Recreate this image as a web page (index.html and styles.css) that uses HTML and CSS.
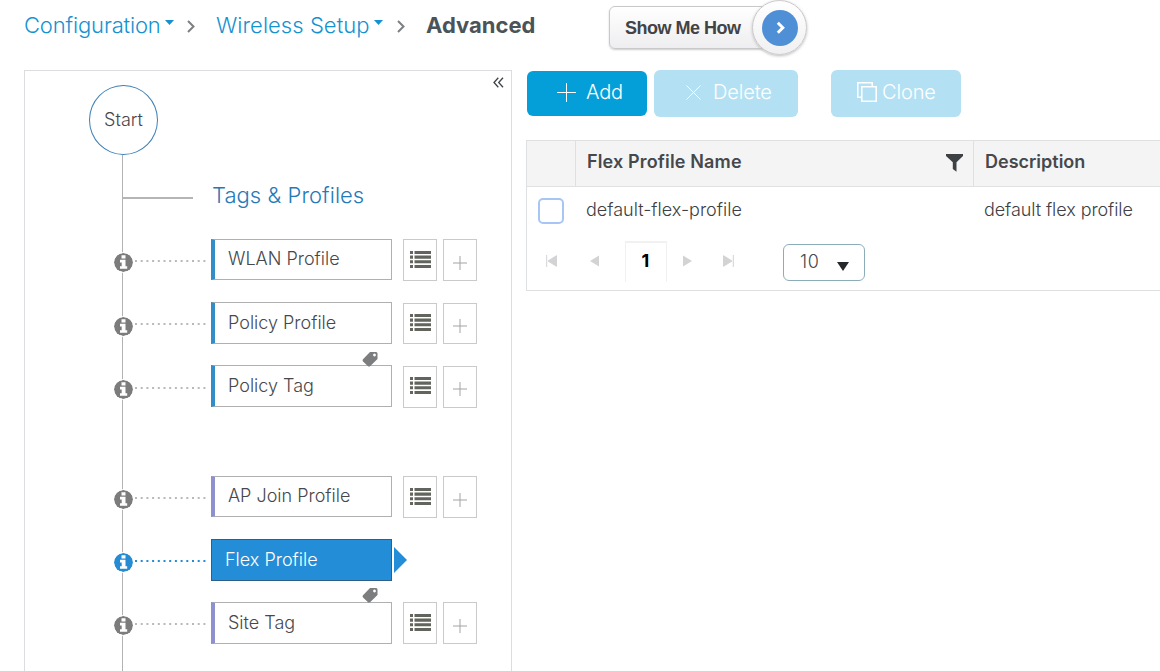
FILE: index.html
```
<!DOCTYPE html>
<html lang="en">
<head>
<meta charset="utf-8">
<title>Advanced Wireless Setup</title>
<link rel="stylesheet" href="styles.css">
</head>
<body>
<svg class="defs" width="0" height="0" aria-hidden="true">
  <symbol id="info" viewBox="0 0 19 19"><circle cx="9.500" cy="9.500" r="9.500" fill="currentColor"/><path fill="#fff" d="M7.500 2.200h4v3.200h-4zM6 6.800h5.500v6.400h1.700v2.600H6v-2.600h1.700V9.400H6z"/></symbol>
  <symbol id="list" viewBox="0 0 21 17"><path fill="currentColor" d="M0 0h3v3H0zM4.500 0H21v3H4.500zM0 4.600h3v3.200H0zM4.500 4.600H21v3.200H4.500zM0 9.300h3v3H0zM4.500 9.300H21v3H4.500zM0 14h3v3H0zM4.500 14H21v3H4.500z"/></symbol>
  <symbol id="plus" viewBox="0 0 14 14"><path d="M7 0v14M0 7h14" stroke="currentColor" fill="none"/></symbol>
  <symbol id="tag" viewBox="0 0 16 16"><path fill="currentColor" fill-rule="evenodd" d="M8 1h6q1.500 0 1.500 1.500V8L8.300 15q-1.300 1-2.500 0L1 10.500q-1-1.200 0-2.300zM12.500 2.600a1.400 1.400 0 1 0 .01 0z"/></symbol>
  <symbol id="dots" viewBox="0 0 71 2"><path d="M0 1h71" stroke="currentColor" stroke-width="2" stroke-dasharray="2 3.700"/></symbol>
</svg>

<header class="topbar">
  <nav class="crumbs">
    <a class="crumb crumb-config">Configuration</a><i class="caret"></i>
    <svg class="sep" width="8" height="13" viewBox="0 0 8 13"><path d="M1 1l5.500 5.500L1 12" fill="none" stroke="#7c8083" stroke-width="2"/></svg>
    <a class="crumb crumb-setup">Wireless Setup</a><i class="caret"></i>
    <svg class="sep sep-last" width="8" height="13" viewBox="0 0 8 13"><path d="M1 1l5.500 5.500L1 12" fill="none" stroke="#7c8083" stroke-width="2"/></svg>
    <span class="crumb-current">Advanced</span>
  </nav>
  <div class="show-how">
    <span class="show-label">Show Me How</span>
    <span class="show-knob"><svg width="36" height="36" viewBox="0 0 36 36"><circle cx="18" cy="18" r="18" fill="#4f8fd5"/><path d="M15.800 12.700l5 5-5 5" fill="none" stroke="#fff" stroke-width="3"/></svg></span>
  </div>
</header>

<main class="main">
  <section class="tree">
    <div class="tree-head">
      <div class="start">Start</div>
      <svg class="collapse" width="11" height="11" viewBox="0 0 11 11"><path d="M5.300.7L1 5.500l4.300 4.800M10 .7L5.700 5.500 10 10.300" fill="none" stroke="#3f4347" stroke-width="1.300"/></svg>
    </div>
    <div class="group"><i class="branch"></i><h2 class="group-title">Tags &amp; Profiles</h2></div>
    <div class="rows">
      <div class="row row-wlan"><svg class="info"><use href="#info"/></svg><svg class="dots"><use href="#dots"/></svg><div class="node"><span>WLAN Profile</span></div><div class="mini"><svg class="list"><use href="#list"/></svg></div><div class="mini"><svg class="plus"><use href="#plus"/></svg></div></div>
      <div class="row row-low"><svg class="info"><use href="#info"/></svg><svg class="dots"><use href="#dots"/></svg><div class="node"><span>Policy Profile</span></div><div class="mini"><svg class="list"><use href="#list"/></svg></div><div class="mini"><svg class="plus"><use href="#plus"/></svg></div></div>
      <div class="row row-low row-ptag"><svg class="info"><use href="#info"/></svg><svg class="dots"><use href="#dots"/></svg><div class="node"><span>Policy Tag</span><svg class="tag"><use href="#tag"/></svg></div><div class="mini"><svg class="list"><use href="#list"/></svg></div><div class="mini"><svg class="plus"><use href="#plus"/></svg></div></div>
    </div>
    <div class="rows rows-site">
      <div class="row row-join"><svg class="info"><use href="#info"/></svg><svg class="dots"><use href="#dots"/></svg><div class="node"><span>AP Join Profile</span></div><div class="mini"><svg class="list"><use href="#list"/></svg></div><div class="mini"><svg class="plus"><use href="#plus"/></svg></div></div>
      <div class="row row-active"><svg class="info"><use href="#info"/></svg><svg class="dots"><use href="#dots"/></svg><div class="node"><span>Flex Profile</span></div><i class="pointer"></i></div>
      <div class="row row-site"><svg class="info"><use href="#info"/></svg><svg class="dots"><use href="#dots"/></svg><div class="node"><span>Site Tag</span><svg class="tag"><use href="#tag"/></svg></div><div class="mini"><svg class="list"><use href="#list"/></svg></div><div class="mini"><svg class="plus"><use href="#plus"/></svg></div></div>
    </div>
  </section>

  <section class="content">
    <div class="actions">
      <button class="btn btn-add"><svg width="19" height="19" viewBox="0 0 19 19"><path d="M9.500 0v19M0 9.500h19" stroke="#fff" fill="none"/></svg><span>Add</span></button>
      <button class="btn btn-off btn-delete"><svg width="15" height="15" viewBox="0 0 15 15"><path d="M.5.500l14 14M14.500.500l-14 14" stroke="#fff" fill="none"/></svg><span>Delete</span></button>
      <button class="btn btn-off btn-clone"><svg width="20" height="20" viewBox="0 0 20 20"><path d="M4.500 15.200H.8V.8h14.400v3.400M4.800 4.800h14.400v14.400H4.800z" stroke="#fff" stroke-width="1.500" fill="none"/></svg><span>Clone</span></button>
    </div>
    <div class="grid">
      <div class="grid-head">
        <div class="cell-check"></div>
        <div class="cell-name"><span class="head-name">Flex Profile Name</span><svg width="17" height="18" viewBox="0 0 17 18"><path d="M0 0h17v2l-6.500 6.200v9.600L6.800 15V8.200L0 2z" fill="#3e4144"/></svg></div>
        <div class="cell-desc"><span>Description</span></div>
      </div>
      <div class="grid-row">
        <div class="cell-check"><i class="box"></i></div>
        <div class="cell-name"><span>default-flex-profile</span></div>
        <div class="cell-desc"><span>default flex profile</span></div>
      </div>
      <div class="pager">
        <svg class="pg-first" width="11" height="12" viewBox="0 0 11 12"><path d="M.7 0v12M10.500.7v10.600L2 6z" fill="#d3d3d5" stroke="#d3d3d5"/></svg>
        <svg class="pg-prev" width="10" height="12" viewBox="0 0 10 12"><path d="M9 .5v11L0 6z" fill="#d3d3d5"/></svg>
        <span class="page">1</span>
        <svg class="pg-next" width="10" height="12" viewBox="0 0 10 12"><path d="M1 .5v11L10 6z" fill="#d3d3d5"/></svg>
        <svg class="pg-last" width="11" height="12" viewBox="0 0 11 12"><path d="M10.300 0v12M.5.700v10.600L9 6z" fill="#d3d3d5" stroke="#d3d3d5"/></svg>
        <div class="size"><span>10</span><i class="down"></i></div>
      </div>
    </div>
  </section>
</main>
</body>
</html>
```

FILE: styles.css
```
* { box-sizing: border-box; }
body { margin: 0; width: 1160px; height: 671px; overflow: hidden; background: #fff; color: #46484c; font: 300 18px/24px Inter, "Liberation Sans", sans-serif; }
svg { display: block; flex: none; }
i { display: block; flex: none; }
span { white-space: nowrap; }
.defs { position: absolute; }

.topbar { display: flex; height: 70px; padding-left: 24px; }
.crumbs { display: flex; width: 585px; height: 50px; align-items: center; font-size: 22px; color: #1492d0; }
.crumb { white-space: nowrap; flex: none; }
.crumb-config { width: 141px; letter-spacing: -.15px; }
.crumb-setup { width: 158px; letter-spacing: .05px; }
.caret { width: 9px; height: 5px; margin-top: -5px; background: #1492d0; clip-path: polygon(0 0, 100% 0, 50% 100%); }
.sep { margin: 2px 21px 0 13px; }
.sep-last { margin-left: 14px; }
.crumb-current { font-weight: 700; color: #4b5358; }
.show-how { display: flex; width: 171px; height: 43px; margin-top: 6px; padding-left: 15px; align-items: center; border: 1px solid #c9c9cb; border-radius: 6px; background: linear-gradient(#fff, #eeeef0); box-shadow: 0 1px 2px #ccc; color: #434345; font: 700 18px "Liberation Sans", sans-serif; }
.show-label { flex: none; width: 127px; padding-top: 1px; letter-spacing: -.5px; }
.show-knob { display: grid; flex: none; width: 55px; height: 55px; place-items: center; border: 1px solid #c9c9cb; border-radius: 50%; background: linear-gradient(#fff, #f0f0f2); box-shadow: 0 1px 3px #bbb; }

.main { display: flex; gap: 14px; padding-left: 24px; }
.tree { flex: none; width: 488px; height: 601px; border: 1px solid #dcdde0; border-bottom: 0; background: linear-gradient(#b2b2b4, #b2b2b4) 97px 84px / 1px 100% no-repeat; }
.tree-head { display: flex; justify-content: space-between; height: 84px; padding: 14px 7px 0 64px; }
.start { display: grid; place-items: center; width: 69px; height: 70px; border: 1px solid #3d80b5; border-radius: 50%; background: #fff; }
.collapse { margin-top: -8px; }
.group { display: flex; height: 84px; padding: 28px 0 0 98px; }
.branch { width: 70px; height: 2px; margin: 14px 19px 0 0; background: #b5b5b7; }
.group-title { margin: 0; font-size: 22px; line-height: 24px; font-weight: 300; letter-spacing: .05px; color: #2679b8; }
.rows { display: grid; gap: 21px; }
.rows-site { margin-top: 69px; }
.row { display: flex; height: 42px; padding-left: 89px; }
.info { width: 19px; height: 19px; margin: 14px 2px 0 0; color: #7c7c7c; border-radius: 50%; box-shadow: 0 0 0 1px #fff; }
.row-low .info { margin-top: 15px; }
.dots { width: 71px; height: 2px; margin: 21px 5px 0 0; color: #b9b9bb; }
.row-ptag .dots { margin-top: 22px; }
.node { position: relative; flex: none; width: 181px; height: 42px; margin-right: 11px; padding: 0 0 0 13px; line-height: 40px; border: 1px solid #aeb0b2; border-left: 4px solid #338dc6; }
.row-wlan .node, .row-join .node { height: 41px; line-height: 38px; }
.rows-site .node { border-left-color: #8e91cd; }
.tag { position: absolute; top: -15px; right: 13px; width: 16px; height: 16px; color: #7b7d7e; }
.row-site .tag { top: -16px; }
.mini { display: grid; width: 34px; height: 42px; margin-right: 6px; border: 1px solid #c9cacc; }
.row-low .mini { height: 41px; margin-top: 1px; }
.row-ptag .mini { height: 42px; }
.list { width: 21px; height: 17px; margin: 11px 0 0 6px; color: #62655d; }
.row-low .list { margin-top: 10px; }
.plus { width: 14px; height: 14px; margin: 16px 0 0 9px; color: #a3a3a5; }
.row-low .plus { margin-top: 15px; }
.row-active .info, .row-active .dots { color: #258cd4; }
.rows-site .row-active .node { margin-right: 2px; padding-left: 13px; border: 1px solid #2d5f87; background: #238ed7; color: #fff; }
.pointer { width: 13px; height: 26px; margin-top: 8px; background: #238ed7; clip-path: polygon(0 0, 100% 50%, 0 100%); }

.content { flex: 1; min-width: 0; }
.actions { display: flex; height: 70px; padding-left: 1px; align-items: flex-start; }
.btn { display: flex; align-items: center; height: 47px; padding: 0 0 3px; border: 0; border-radius: 6px; color: #fff; font: 300 20px/24px Inter, "Liberation Sans", sans-serif; letter-spacing: -.15px; }
.btn-add { width: 120px; height: 45px; margin: 1px 7px 0 0; padding-left: 30px; gap: 10px; background: #049fd9; }
.btn-off { background: #b3e1f3; }
.btn-delete { width: 144px; margin-right: 33px; padding-left: 32px; gap: 12px; }
.btn-clone { width: 130px; padding-left: 26px; gap: 5px; }
.grid { height: 151px; border: 1px solid #dfe0e2; border-right: 0; }
.grid-head { display: flex; height: 46px; background: #f4f4f5; border-bottom: 1px solid #e0e1e3; font-weight: 600; }
.head-name { letter-spacing: .15px; }
.cell-check { flex: none; width: 48px; }
.cell-name { display: flex; flex: none; width: 399px; padding: 9px 11px 0 11px; }
.cell-desc { flex: 1; padding: 9px 0 0 11px; }
.grid-head .cell-name { justify-content: space-between; border: solid #dfe0e2; border-width: 0 1px; }
.cell-name svg { margin-top: 4px; margin-right: -1px; }
.grid-row { display: flex; height: 52px; color: #3d4044; }
.grid-row .cell-name, .grid-row .cell-desc { padding-top: 11px; }
.grid-row .cell-desc { padding-left: 10px; letter-spacing: -.08px; }
.box { width: 26px; height: 26px; margin: 11px 0 0 11px; border: 2px solid #a8c6f5; border-radius: 5px; }
.pager { display: flex; height: 51px; align-items: flex-start; padding-left: 19px; }
.pager > svg { margin-top: 16px; }
.pager .pg-prev { margin-left: 33px; }
.page { width: 42px; height: 41px; margin: 2px 15px 0 25px; padding-right: 1px; border: solid #f1f1f2; border-width: 2px 1px 0; text-align: center; line-height: 35px; font-weight: 700; color: #000; }
.pager .pg-last { margin-left: 31px; }
.size { display: flex; width: 82px; height: 37px; margin: 5px 0 0 49px; padding-left: 16px; border: 1px solid #8badba; border-radius: 6px; line-height: 33px; }
.size span { width: 22px; letter-spacing: .6px; }
.down { width: 12px; height: 9px; margin: 17px 0 0 15px; background: #26292c; clip-path: polygon(0 0, 100% 0, 50% 100%); }
```
